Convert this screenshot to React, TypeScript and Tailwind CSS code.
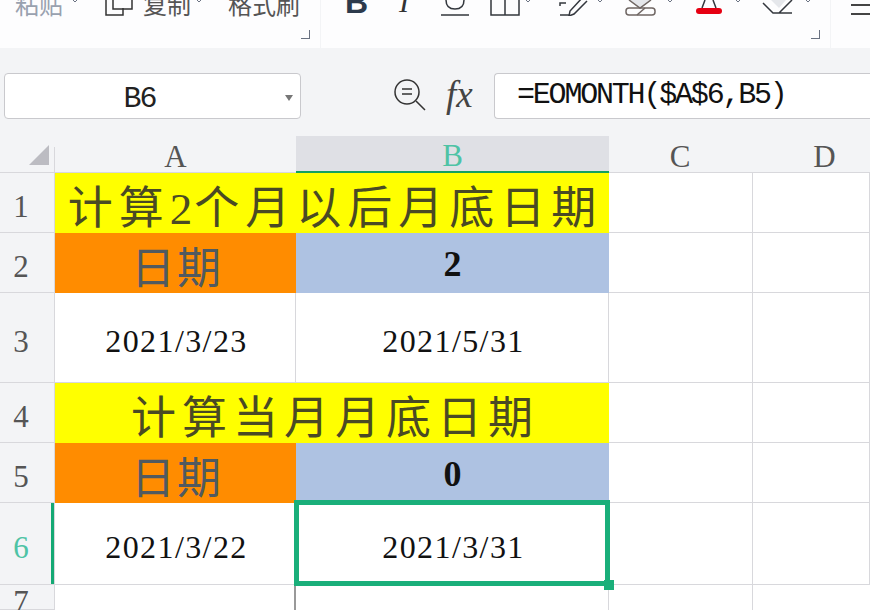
import type { ReactNode } from 'react';

const mono = "font-['Liberation_Mono','Noto_Sans_CJK_SC',monospace]";
const serif = "font-['Liberation_Serif','Noto_Sans_CJK_SC',serif]";
const cjk = "font-['Liberation_Serif','Noto_Sans_CJK_SC',sans-serif]";

const Caret = () => (
  <svg width="8" height="6" viewBox="0 0 8 6" className="text-gray-500">
    <path d="M1 1l3 3 3-3" fill="none" stroke="currentColor" strokeWidth="1" />
  </svg>
);

const CornerMark = () => (
  <div className="absolute right-[10px] bottom-[9px] h-[9px] w-[9px] border-r border-b border-gray-500" />
);

const Icon = ({ w, children }: { w: number; children: ReactNode }) => (
  <svg width={w} height="16" viewBox={`0 0 ${w} 16`} fill="none" stroke="#33373d" strokeWidth="1.5">
    {children}
  </svg>
);

const Ribbon = () => (
  <div className="flex h-12 shrink-0 overflow-hidden bg-[#fdfdfe] text-[#555] shadow-[0_1px_2px_rgba(0,0,0,0.15)]">
    <div className="relative h-full w-[321px] border-r border-gray-100">
      <div className={`flex h-4 items-end pl-[15px] text-[24px] leading-none ${cjk}`}>
        <div className="-mb-[2px] text-gray-400">粘贴</div>
        <div className="mb-3 ml-2"><Caret /></div>
        <svg width="32" height="16" viewBox="0 0 32 16" fill="none" stroke="#333" strokeWidth="1.5" className="ml-[25px]">
          <path d="M2 0v15h17V8M9 0v9h19V0" />
        </svg>
        <div className="-mb-[2px] ml-[7px]">复制</div>
        <div className="mb-3 ml-1"><Caret /></div>
        <div className="-mb-[2px] ml-[25px]">格式刷</div>
      </div>
      <CornerMark />
    </div>
    <div className="relative h-full w-[510px] border-r border-gray-100">
      <div className="flex h-4 items-end">
        <div className="mb-[6px] ml-6 font-['Liberation_Sans',sans-serif] text-[32px] leading-[16px] font-bold text-[#2c3a4c]">B</div>
        <div className="mb-[6px] ml-[31px] font-['Liberation_Serif',serif] text-[30px] leading-[16px] text-[#333] italic">I</div>
        <div className="ml-[31px]">
          <Icon w={30}><path d="M6 0c0 7 4 9 9 9s9-2 9-9M1 15h28" /></Icon>
        </div>
        <div className="ml-5">
          <Icon w={30}><path d="M1 0v15h28V0M15 0v15" /></Icon>
        </div>
        <div className="mb-3 ml-1"><Caret /></div>
        <div className="ml-[26px]">
          <Icon w={32}><path d="M2 6V3h6M2 15h10M29 1L16 14l-5 2 1-5L25-3" /></Icon>
        </div>
        <div className="mb-3 ml-[6px]"><Caret /></div>
        <div className="ml-[21px]">
          <svg width="31" height="16" viewBox="0 0 31 16" fill="none" stroke="#6f6663" strokeWidth="1.5">
            <path d="M4 0l11 8 11-8" fill="#e5e7eb" />
            <rect x="1" y="8" width="29" height="7" rx="3" />
            <path d="M12 15l8-7" />
          </svg>
        </div>
        <div className="mb-3 ml-[10px]"><Caret /></div>
        <div className="ml-[22px]">
          <svg width="26" height="16" viewBox="0 0 26 16" fill="none">
            <path d="M6 8L9 0M20 8L17 0" stroke="#33373d" strokeWidth="1.5" />
            <rect x="0" y="8" width="26" height="6" rx="3" fill="#e60012" />
          </svg>
        </div>
        <div className="mb-3 ml-3"><Caret /></div>
        <div className="ml-[20px]">
          <svg width="31" height="16" viewBox="0 0 31 16" fill="none" stroke="#33373d" strokeWidth="1.5">
            <path d="M1 3l10 10h19M17 13L30 0" />
            <path d="M9 0h15l-7 8z" fill="#e5e7eb" stroke="none" />
          </svg>
        </div>
        <div className="mb-3 ml-[11px]"><Caret /></div>
      </div>
      <CornerMark />
    </div>
    <div className="flex-1 pl-5">
      <div className="h-1" />
      <div className="h-[2px] w-full bg-[#444]" />
      <div className="h-[7px]" />
      <div className="h-[2px] w-full bg-[#444]" />
    </div>
  </div>
);

const FormulaBar = () => (
  <div className="flex h-[88px] shrink-0 items-start bg-[#f3f4f6] pt-[25px] pl-1">
    <div className="relative flex h-[46px] w-[297px] items-center justify-center rounded border border-[#c9c9cd] bg-white pt-[6px] pr-[26px]">
      <span className={`${mono} text-[30px] tracking-[-2px] text-[#222]`}>B6</span>
      <svg width="10" height="6" viewBox="0 0 10 6" className="absolute top-[21px] right-[6px]">
        <path d="M1 0h8L5 6z" fill="#777" />
      </svg>
    </div>
    <svg width="34" height="34" viewBox="0 0 34 34" fill="none" stroke="#333" strokeWidth="1.5" className="mt-[5px] ml-[92px]">
      <circle cx="14" cy="14" r="12" />
      <path d="M9 11h10M9 16h10M23 23l9 9" />
    </svg>
    <div className="mt-[1px] ml-[19px] w-[31px] font-['Liberation_Serif',serif] text-[37px] leading-[42px] text-[#444] italic">fx</div>
    <div className="ml-[17px] flex h-[46px] flex-1 items-center rounded-l border border-r-0 border-[#c9c9cd] bg-white pb-[2px] pl-[22px]">
      <span className={`${mono} text-[30px] tracking-[-2.2px] text-[#111]`}>=EOMONTH($A$6,B5)</span>
    </div>
  </div>
);

const colHead = `${serif} flex items-end justify-center text-[31px] leading-[30px] text-[#555] border-b border-[#d8d8dc]`;
const rowHead = `${serif} flex items-center justify-center pt-[8px] pr-[12px] text-[31px] leading-none text-[#555] border-b border-r border-[#d8d8dc] bg-[#f3f4f6]`;
const blank = 'border-r border-b border-[#d8d8dc] bg-white';
const dateCell = `${serif} flex items-center justify-center pt-[6px] pl-[3px] border-r border-b border-[#d8d8dc] bg-white text-[32px] leading-none tracking-[1.4px] text-[#111]`;
const titleCell = `${cjk} col-span-2 flex items-center justify-center bg-[#ffff00] pt-[12px] pl-[6px] text-[45px] leading-none tracking-[6px] text-[#4a4a24]`;
const labelCell = `${cjk} flex items-center justify-center bg-[#ff8c00] pt-[14px] pl-[3px] text-[44px] leading-none tracking-[2px] text-[#505a60]`;
const numCell = "flex items-center justify-center bg-[#aec2e2] pt-[2px] font-['Liberation_Serif',serif] text-[36px] leading-none font-bold text-[#111]";

const Sheet = () => (
  <div className="relative grid flex-1 grid-cols-[55px_241px_313px_144px_117px] grid-rows-[37px_60px_60px_90px_60px_60px_82px_25px] bg-[#f3f4f6]">
    <div className="relative border-b border-[#d8d8dc]">
      <div className="absolute right-[6px] bottom-[7px] h-0 w-0 border-b-[20px] border-l-[20px] border-b-[#bcbcc2] border-l-transparent" />
      <div className="absolute top-[11px] right-0 bottom-0 w-px bg-[#d8d8dc]" />
    </div>
    <div className={colHead}>A</div>
    <div className={`${colHead} !border-b-[2px] !border-b-[#14a05f] bg-[#dfe0e5] !text-[#4ec3a5]`}>B</div>
    <div className={`${colHead} pr-[2px]`}>C</div>
    <div className={`${colHead} pl-[26px]`}>D</div>

    <div className={rowHead}>1</div>
    <div className={titleCell}><span>计算</span><span className="tracking-[2px]">2</span><span>个月以后月底日期</span></div>
    <div className={blank} />
    <div className={blank} />

    <div className={rowHead}>2</div>
    <div className={labelCell}>日期</div>
    <div className={numCell}>2</div>
    <div className={blank} />
    <div className={blank} />

    <div className={rowHead}>3</div>
    <div className={dateCell}>2021/3/23</div>
    <div className={dateCell}>2021/5/31</div>
    <div className={blank} />
    <div className={blank} />

    <div className={rowHead}>4</div>
    <div className={titleCell}>计算当月月底日期</div>
    <div className={blank} />
    <div className={blank} />

    <div className={rowHead}>5</div>
    <div className={labelCell}>日期</div>
    <div className={numCell}>0</div>
    <div className={blank} />
    <div className={blank} />

    <div className={`${rowHead} relative bg-[#dfe0e5] !text-[#4ec3a5]`}>
      6
      <div className="absolute top-0 right-0 bottom-0 w-[3px] bg-[#14a974]" />
    </div>
    <div className={dateCell}>2021/3/22</div>
    <div className={`${dateCell} relative`}>
      2021/3/31
      <div className="absolute -top-[3px] -right-[2px] -bottom-[2px] -left-[2px] border-[5px] border-[#1aaf7a]" />
      <div className="absolute -right-[6px] -bottom-[6px] h-[10px] w-[10px] bg-[#1aaf7a]" />
    </div>
    <div className={blank} />
    <div className={blank} />

    <div className={`${rowHead} items-start !pt-[1px]`}>7</div>
    <div className="border-r-2 border-[#999] bg-white" />
    <div className="border-r border-[#d8d8dc] bg-white" />
    <div className="border-r border-[#d8d8dc] bg-white" />
    <div className="bg-white" />
  </div>
);

export default function App() {
  return (
    <div className="flex h-[610px] w-[870px] flex-col overflow-hidden bg-white">
      <Ribbon />
      <FormulaBar />
      <Sheet />
    </div>
  );
}
